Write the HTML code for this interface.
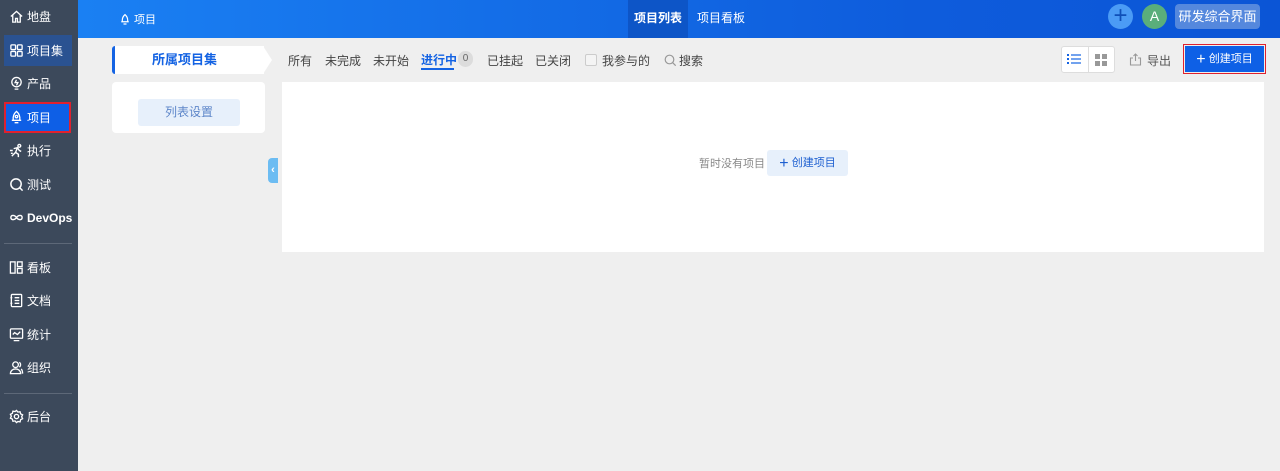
<!DOCTYPE html>
<html><head><meta charset="utf-8"><style>
*{margin:0;padding:0;box-sizing:border-box}
body{width:1280px;height:471px;overflow:hidden;background:#efefef;font-family:"Liberation Sans","Noto Sans CJK SC",sans-serif;font-size:12px;position:relative;color:#333}
.sb{position:absolute;left:0;top:0;width:78px;height:471px;background:#3c495b}
.it{position:absolute;left:4px;width:68px;height:31px;color:#fff;font-size:12px;display:flex;align-items:center;padding-left:5px;gap:3px}
.it svg{width:15px;height:15px;flex:none}
.sep{position:absolute;left:4px;width:68px;height:1px;background:#5d6878}
.hd{position:absolute;left:78px;top:0;width:1202px;height:38px;background:linear-gradient(90deg,#1a80f3,#0e5cdc 70%,#0b55d6)}
.abs{position:absolute}
.tab{position:absolute;top:68px;height:2px;background:#1463e3}
.f{position:absolute;top:52px;font-size:12px;color:#444}
</style></head><body>
<div class="sb">
 <div class="it" style="top:1px"><svg viewBox="0 0 16 16" fill="none" stroke="#fff" stroke-width="1.4"><path d="M2 8L8 2.5 14 8M4 6.5V14h3v-4h2v4h3V6.5"/></svg>地盘</div>
 <div class="it" style="top:35px;background:#2a5291"><svg viewBox="0 0 16 16" fill="none" stroke="#fff" stroke-width="1.4"><rect x="2" y="2" width="5" height="5" rx="1"/><rect x="9" y="2" width="5" height="5" rx="1"/><rect x="2" y="9" width="5" height="5" rx="1"/><rect x="9" y="9" width="5" height="5" rx="1"/></svg>项目集</div>
 <div class="it" style="top:68px"><svg viewBox="0 0 16 16" fill="none" stroke="#fff" stroke-width="1.4"><circle cx="8" cy="6.5" r="5"/><path d="M6 14h4M8 4l-1.5 3h3L8 10"/></svg>产品</div>
 <div class="it" style="top:102px;background:#0e5fe6;outline:2px solid #e0212e;outline-offset:-2px;width:67px"><svg viewBox="0 0 16 16" fill="none" stroke="#fff" stroke-width="1.4"><path d="M8 1.5C5 4 4 7 4.5 11h7C12 7 11 4 8 1.5zM3 11h10M6 13.5h4"/><circle cx="8" cy="7" r="1.3"/></svg>项目</div>
 <div class="it" style="top:135px"><svg viewBox="0 0 16 16" fill="none" stroke="#fff" stroke-width="1.5"><circle cx="11" cy="3" r="1.5"/><path d="M5 6l4-1 2 3 2 1M9 5l-2 5 3 2v3M7 10l-4 4M1 8h3M2 11h2"/></svg>执行</div>
 <div class="it" style="top:169px"><svg viewBox="0 0 16 16" fill="none" stroke="#fff" stroke-width="1.6"><circle cx="7.5" cy="7.5" r="5.5"/><path d="M11.5 11.5l3 3"/></svg>测试</div>
 <div class="it" style="top:202px;font-weight:bold"><svg viewBox="0 0 16 16" fill="none" stroke="#fff" stroke-width="1.5"><path d="M8 8c-2-3-6-3-6 0s4 3 6 0c2-3 6-3 6 0s-4 3-6 0"/></svg>DevOps</div>
 <div class="sep" style="top:243px"></div>
 <div class="it" style="top:252px"><svg viewBox="0 0 16 16" fill="none" stroke="#fff" stroke-width="1.4"><rect x="1.5" y="2" width="5" height="12"/><rect x="9" y="2" width="5" height="5"/><rect x="9" y="9" width="5" height="5"/></svg>看板</div>
 <div class="it" style="top:285px"><svg viewBox="0 0 16 16" fill="none" stroke="#fff" stroke-width="1.4"><rect x="2.5" y="1.5" width="11" height="13" rx="1"/><path d="M6 5h5M6 8h5M6 11h5M1.5 5h2M1.5 11h2"/></svg>文档</div>
 <div class="it" style="top:319px"><svg viewBox="0 0 16 16" fill="none" stroke="#fff" stroke-width="1.4"><rect x="1.5" y="2" width="13" height="10" rx="1"/><path d="M4 8l2-2 3 2 3-3M5 14.5h6"/></svg>统计</div>
 <div class="it" style="top:352px"><svg viewBox="0 0 16 16" fill="none" stroke="#fff" stroke-width="1.4"><circle cx="7" cy="5" r="3"/><path d="M1.5 14.5c0-3 2.5-5 5.5-5s5.5 2 5.5 5zM11 2.5a3 3 0 010 5M13 9.5c1 1 1.5 3 1.5 5"/></svg>组织</div>
 <div class="sep" style="top:393px"></div>
 <div class="it" style="top:401px"><svg viewBox="0 0 16 16" fill="none" stroke="#fff" stroke-width="1.4"><circle cx="8" cy="8" r="2.3"/><path d="M8 1.5l1.5 1.8 2.3-.4.6 2.3 2.1 1-1 2.1 1 2.1-2.1 1-.6 2.3-2.3-.4L8 14.5l-1.5-1.8-2.3.4-.6-2.3-2.1-1 1-2.1-1-2.1 2.1-1 .6-2.3 2.3.4z"/></svg>后台</div>
</div>
<div class="hd">
 <div class="abs" style="left:41px;top:11px;color:#fff;font-size:11px;display:flex;gap:3px;align-items:center"><svg width="12" height="13" viewBox="0 0 16 16" fill="none" stroke="#fff" stroke-width="1.6"><path d="M8 1.5C5 4 4 7 4.5 11h7C12 7 11 4 8 1.5zM3 11h10M6 14h4"/></svg>项目</div>
 <div class="abs" style="left:550px;top:0;width:60px;height:38px;background:#0d55c7;color:#fff;font-weight:bold;font-size:12px;line-height:36px;text-align:center">项目列表</div>
 <div class="abs" style="left:619px;top:0;color:#fff;font-size:12px;line-height:36px">项目看板</div>
 <div class="abs" style="left:1030px;top:4px;width:25px;height:25px;border-radius:50%;background:#4b9bf5;color:#0f4fb8;font-size:24px;line-height:23px;text-align:center">+</div>
 <div class="abs" style="left:1064px;top:4px;width:25px;height:25px;border-radius:50%;background:#5aae7b;color:#fff;font-size:14px;line-height:25px;text-align:center">A</div>
 <div class="abs" style="left:1097px;top:4px;width:85px;height:25px;border-radius:4px;background:#5588dd;color:#fff;font-size:13px;line-height:25px;text-align:center">研发综合界面</div>
</div>
<div class="abs" style="left:112px;top:46px;width:152px;height:28px;background:#fff;border-left:3px solid #1463e3;border-radius:3px 0 0 3px;color:#1463e3;font-weight:bold;font-size:13px;line-height:28px;padding-left:37px">所属项目集</div>
<div class="abs" style="left:263px;top:46px;width:0;height:0;border-top:14px solid transparent;border-bottom:14px solid transparent;border-left:9px solid #fff"></div>
<div class="abs" style="left:112px;top:82px;width:153px;height:51px;background:#fff;border-radius:4px"></div>
<div class="abs" style="left:138px;top:99px;width:102px;height:27px;background:#e7f0fb;border-radius:3px;color:#5d86c9;font-size:12px;line-height:27px;text-align:center">列表设置</div>
<div class="abs" style="left:268px;top:158px;width:10px;height:25px;background:#6cbcf2;border-radius:4px 0 0 4px;color:#fff;font-size:11px;line-height:25px;text-align:center;font-weight:bold">‹</div>
<div class="f" style="left:288px">所有</div>
<div class="f" style="left:325px">未完成</div>
<div class="f" style="left:373px">未开始</div>
<div class="f" style="left:421px;color:#1463e3;font-weight:bold;font-size:12px;top:51px">进行中</div>
<div class="tab" style="left:421px;width:33px"></div>
<div class="abs" style="left:458px;top:51px;width:15px;height:16px;border-radius:8px;background:#dcdcdc;color:#666;font-size:10px;line-height:16px;text-align:center">0</div>
<div class="f" style="left:487px">已挂起</div>
<div class="f" style="left:535px">已关闭</div>
<div class="abs" style="left:585px;top:54px;width:12px;height:12px;border:1px solid #ccc;border-radius:2px;background:#f4f4f4"></div>
<div class="f" style="left:602px">我参与的</div>
<svg class="abs" style="left:664px;top:54px" width="13" height="13" viewBox="0 0 13 13" fill="none" stroke="#999" stroke-width="1.2"><circle cx="5.5" cy="5.5" r="4.3"/><path d="M8.7 8.7l3 3"/></svg>
<div class="f" style="left:679px">搜索</div>
<div class="abs" style="left:1061px;top:46px;width:54px;height:27px;background:#fff;border:1px solid #ddd;border-radius:3px"></div>
<div class="abs" style="left:1088px;top:47px;width:1px;height:25px;background:#ddd"></div>
<svg class="abs" style="left:1067px;top:53px" width="14" height="12" viewBox="0 0 14 12" fill="#1463e3"><rect x="0" y="1" width="2" height="2"/><rect x="4" y="1.4" width="10" height="1.2"/><rect x="0" y="5" width="2" height="2"/><rect x="4" y="5.4" width="10" height="1.2"/><rect x="0" y="9" width="2" height="2"/><rect x="4" y="9.4" width="10" height="1.2"/></svg>
<svg class="abs" style="left:1095px;top:54px" width="12" height="12" viewBox="0 0 12 12" fill="#999"><rect x="0" y="0" width="5" height="5"/><rect x="7" y="0" width="5" height="5"/><rect x="0" y="7" width="5" height="5"/><rect x="7" y="7" width="5" height="5"/></svg>
<svg class="abs" style="left:1129px;top:53px" width="13" height="13" viewBox="0 0 13 13" fill="none" stroke="#999" stroke-width="1.1"><path d="M4 5H1.5v7h10V5H9M6.5 1v7M4.5 3l2-2 2 2"/></svg>
<div class="f" style="left:1147px;color:#555">导出</div>
<div class="abs" style="left:1183px;top:44px;width:83px;height:30px;border:1.5px solid #e0212e"></div>
<div class="abs" style="left:1185px;top:46px;width:79px;height:26px;background:#0e60e6;color:#fff;font-size:11px;line-height:26px;text-align:center"><span style="font-size:16px;vertical-align:-2px">+</span> 创建项目</div>
<div class="abs" style="left:282px;top:82px;width:982px;height:170px;background:#fff"></div>
<div class="abs" style="left:699px;top:155px;color:#888;font-size:11px">暂时没有项目</div>
<div class="abs" style="left:767px;top:150px;width:81px;height:26px;background:#e7f0fb;border-radius:3px;color:#1d5fd0;font-size:11px;line-height:26px;text-align:center"><span style="font-size:16px;vertical-align:-2px">+</span> 创建项目</div>
</body></html>
